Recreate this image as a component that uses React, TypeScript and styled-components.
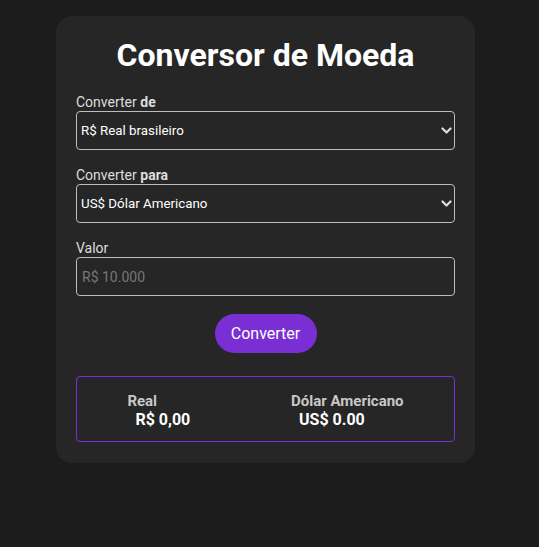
import React from "react";
import styled, { createGlobalStyle } from "styled-components";

const Global = createGlobalStyle`
  html, body { margin: 0; padding: 0; background: #1c1c1c; }
  body { font-family: Roboto, "Liberation Sans", sans-serif; color: #fff; }
  * { box-sizing: border-box; }
`;

const Page = styled.div`
  min-height: 547px;
  padding: 16px 0 0 56px;
`;

const Card = styled.div`
  width: 419px;
  background: #262626;
  border-radius: 16px;
  padding: 20px 20px 21px;
  display: flex;
  flex-direction: column;
`;

const Title = styled.h1`
  margin: 0 0 20px;
  text-align: center;
  font-size: 32px;
  font-weight: 700;
  color: #fff;
  line-height: 38px;
`;

const Field = styled.div`
  display: flex;
  flex-direction: column;
  gap: 1px;
  margin-bottom: 17px;
`;

const Label = styled.label`
  font-size: 14px;
  line-height: 16px;
  color: #ddd;
  b { font-weight: 700; }
`;

const SelectWrap = styled.div`
  position: relative;
`;

const Select = styled.select`
  appearance: none;
  width: 100%;
  height: 39px;
  background: #262626;
  color: #fff;
  border: 1px solid #bdbdbd;
  border-radius: 4px;
  padding: 0 28px 0 4px;
  font-family: Roboto, "Liberation Sans", sans-serif;
  font-size: 13.33px;
  outline: none;
`;

const Chevron = styled.svg`
  position: absolute;
  right: 3px;
  top: 16px;
  width: 11px;
  height: 7px;
  pointer-events: none;
`;

const Input = styled.input`
  width: 100%;
  height: 39px;
  background: #262626;
  color: #fff;
  border: 1px solid #bdbdbd;
  border-radius: 4px;
  padding: 0 5px;
  font-family: Roboto, "Liberation Sans", sans-serif;
  font-size: 14px;
  outline: none;
  &::placeholder { color: #777; }
`;

const Button = styled.button`
  align-self: center;
  margin: 1px 0 23px;
  width: 102px;
  height: 39px;
  border: none;
  border-radius: 20px;
  background: #7a2fd4;
  color: #fff;
  font-family: Roboto, "Liberation Sans", sans-serif;
  font-size: 16px;
`;

const Result = styled.div`
  height: 66px;
  padding-top: 4px;
  border: 1px solid #7a2fd4;
  border-radius: 4px;
  display: flex;
  justify-content: space-around;
  align-items: center;
`;

const Col = styled.div`
  display: flex;
  flex-direction: column;
`;

const Currency = styled.span`
  font-size: 15px;
  font-weight: 700;
  color: #c8c8c8;
  line-height: 17px;
`;

const Amount = styled.span`
  font-size: 16px;
  font-weight: 700;
  color: #fff;
  line-height: 19px;
  padding-left: 8px;
`;

const Arrow = () => (
  <Chevron viewBox="0 0 11 7">
    <polyline points="1.5,1.5 5.5,5.5 9.5,1.5" fill="none" stroke="#e0e0e0" strokeWidth="2.2" strokeLinecap="round" strokeLinejoin="round" />
  </Chevron>
);

export default function App() {
  return (
    <Page>
      <Global />
      <Card>
        <Title>Conversor de Moeda</Title>
        <Field>
          <Label>
            Converter <b>de</b>
          </Label>
          <SelectWrap>
            <Select defaultValue="BRL">
              <option value="BRL">R$ Real brasileiro</option>
              <option value="USD">US$ Dólar Americano</option>
            </Select>
            <Arrow />
          </SelectWrap>
        </Field>
        <Field>
          <Label>
            Converter <b>para</b>
          </Label>
          <SelectWrap>
            <Select defaultValue="USD">
              <option value="BRL">R$ Real brasileiro</option>
              <option value="USD">US$ Dólar Americano</option>
            </Select>
            <Arrow />
          </SelectWrap>
        </Field>
        <Field>
          <Label>Valor</Label>
          <Input placeholder="R$ 10.000" />
        </Field>
        <Button>Converter</Button>
        <Result>
          <Col>
            <Currency>Real</Currency>
            <Amount>R$ 0,00</Amount>
          </Col>
          <Col>
            <Currency>Dólar Americano</Currency>
            <Amount>US$ 0.00</Amount>
          </Col>
        </Result>
      </Card>
    </Page>
  );
}
